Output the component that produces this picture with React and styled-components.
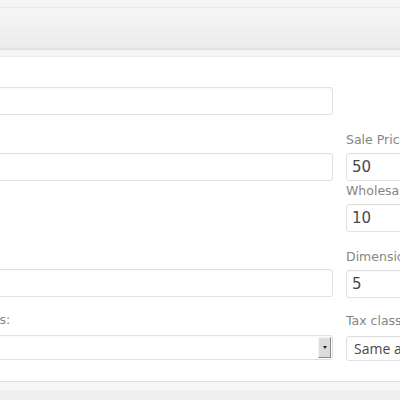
import styled, { createGlobalStyle } from "styled-components";

const GlobalStyle = createGlobalStyle`
  html, body {
    margin: 0;
    padding: 0;
    background: #f5f5f5;
    overflow: hidden;
  }
  body {
    font-family: "DejaVu Sans", sans-serif;
  }
`;

const Page = styled.div`
    width: 400px;
    height: 400px;
    display: flex;
    flex-direction: column;
    padding-top: 7px;
    box-sizing: border-box;
  `,
  Toolbar = styled.div`
    height: 43px;
    border-top: 1px solid #e9e9e9;
    border-bottom: 2px solid #e2e2e2;
    background: linear-gradient(to bottom, #f6f6f6, #ebebeb);
    box-sizing: border-box;
    flex-shrink: 0;
  `,
  Panel = styled.div`
    margin-top: 6px;
    height: 326px;
    background: #fff;
    border-top: 1px solid #ececec;
    border-bottom: 1px solid #dedede;
    box-sizing: border-box;
    display: grid;
    grid-template-columns: 390px 1fr;
    column-gap: 13px;
    margin-left: -57px;
    flex-shrink: 0;
  `,
  Footer = styled.div`
    flex: 1;
    border-top: 8px solid #f7f7f7;
    background: #efefef;
  `,
  Column = styled.div`
    display: flex;
    flex-direction: column;
  `,
  Field = styled.div`
    display: flex;
    flex-direction: column;
    margin-top: ${(p) => p.$top}px;
    gap: ${(p) => p.$gap || 5}px;
  `,
  Label = styled.label`
    font-family: "DejaVu Sans", sans-serif;
    font-size: 12.5px;
    line-height: 16px;
    height: 16px;
    color: #858585;
    white-space: nowrap;
  `,
  Input = styled.div`
    height: 28px;
    border: 1px solid #e0e0e0;
    border-radius: 3px;
    box-shadow: inset 0 1px 2px #00000008;
    box-sizing: border-box;
    background: #fff;
    padding: 0 5px;
    font-family: "DejaVu Sans", sans-serif;
    font-size: 15px;
    line-height: 26px;
    color: #484848;
    white-space: nowrap;
    width: ${(p) => (p.$wide ? "390px" : "200px")};
  `,
  Select = styled(Input)`
    height: 25px;
    line-height: 23px;
    padding-left: 7px;
    font-family: "Open Sans", sans-serif;
    font-size: 14px;
    position: relative;
  `,
  DropButton = styled.span`
    position: absolute;
    right: 1px;
    top: 1px;
    width: 13px;
    height: 21px;
    background: #dcdcdc;
    border-right: 1px solid #8a8a8a;
    border-bottom: 1px solid #8a8a8a;
    border-top: 1px solid #f4f4f4;
    border-left: 1px solid #f4f4f4;
    box-sizing: border-box;
    display: flex;
    align-items: center;
    justify-content: center;
    &::after {
      content: "";
      border-left: 2px solid transparent;
      border-right: 2px solid transparent;
      border-top: 3px solid #222;
    }
  `;

function App() {
  return (
    <Page>
      <GlobalStyle />
      <Toolbar />
      <Panel>
        <Column>
          <Field $top={4} $gap={10}>
            <Label />
            <Input $wide />
          </Field>
          <Field $top={17}>
            <Label />
            <Input $wide />
          </Field>
          <Field $top={67}>
            <Label />
            <Input $wide />
          </Field>
          <Field $top={15} $gap={7}>
            <Label>Tax status:</Label>
            <Select $wide>
              <DropButton />
            </Select>
          </Field>
        </Column>
        <Column>
          <Field $top={75}>
            <Label>Sale Price</Label>
            <Input>50</Input>
          </Field>
          <Field $top={2}>
            <Label>Wholesale Price</Label>
            <Input>10</Input>
          </Field>
          <Field $top={17}>
            <Label>Dimensions</Label>
            <Input>5</Input>
          </Field>
          <Field $top={15} $gap={7}>
            <Label>Tax class:</Label>
            <Select>Same as parent</Select>
          </Field>
        </Column>
      </Panel>
      <Footer />
    </Page>
  );
}

export default App;
